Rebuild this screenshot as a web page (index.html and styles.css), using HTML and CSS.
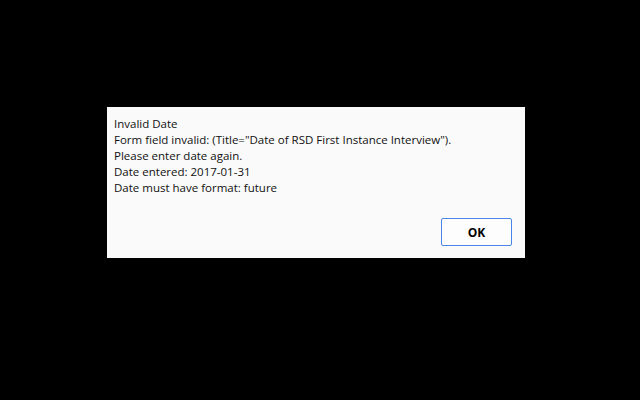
FILE: index.html
```html
<!DOCTYPE html>
<html>
<head>
<meta charset="utf-8">
<link rel="stylesheet" href="styles.css">
</head>
<body>
<div class="screen">
  <div class="dialog">
    <div class="message">
      <div>Invalid Date</div>
      <div>Form field invalid: (Title="Date of RSD First Instance Interview").</div>
      <div>Please enter date again.</div>
      <div>Date entered: 2017-01-31</div>
      <div>Date must have format: future</div>
    </div>
    <div class="actions">
      <button class="ok">OK</button>
    </div>
  </div>
</div>
</body>
</html>
```
FILE: styles.css
```css
html, body {
  margin: 0;
  padding: 0;
  background: #000;
}
.screen {
  width: 640px;
  height: 400px;
  display: flex;
  align-items: flex-start;
  justify-content: flex-start;
  padding: 107px 0 0 107px;
  box-sizing: border-box;
}
.dialog {
  width: 418px;
  height: 151px;
  box-sizing: border-box;
  background: #fafafa;
  padding: 9px 13px 12px 7px;
  display: flex;
  flex-direction: column;
  font-family: "Open Sans", "Noto Sans", sans-serif;
  font-size: 11.5px;
  line-height: 16px;
  color: #111;
}
.message {
  flex: 1;
}
.actions {
  display: flex;
  justify-content: flex-end;
}
.ok {
  width: 71px;
  height: 28px;
  box-sizing: border-box;
  border: 1px solid #4a86e8;
  border-radius: 2px;
  background: #fdfdfd;
  font-family: "Open Sans", "Noto Sans", sans-serif;
  font-weight: bold;
  font-size: 12px;
  color: #000;
  padding: 0;
}
```
